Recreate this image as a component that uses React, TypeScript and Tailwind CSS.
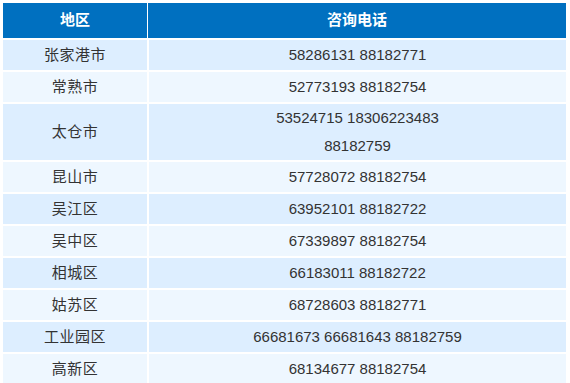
import React from 'react';

interface Row {
  area: string;
  phones: string[];
}

// 一行可能有两行号码（太仓市）
const rows: Row[] = [
  { area: '张家港市', phones: ['58286131 88182771'] },
  { area: '常熟市', phones: ['52773193 88182754'] },
  { area: '太仓市', phones: ['53524715 18306223483', '88182759'] },
  { area: '昆山市', phones: ['57728072 88182754'] },
  { area: '吴江区', phones: ['63952101 88182722'] },
  { area: '吴中区', phones: ['67339897 88182754'] },
  { area: '相城区', phones: ['66183011 88182722'] },
  { area: '姑苏区', phones: ['68728603 88182771'] },
  { area: '工业园区', phones: ['66681673 66681643 88182759'] },
  { area: '高新区', phones: ['68134677 88182754'] },
];

const App: React.FC = () => {
  return (
    <div
      className="w-[570px] h-[383px] overflow-hidden bg-white pl-[3px] pt-[3px]"
      style={{ fontFamily: '"Liberation Sans", Arial, "Noto Sans CJK SC", sans-serif' }}
    >
      <div className="w-[563px] flex flex-col gap-y-[2px]">
        {/* 表头 */}
        <div className="grid grid-cols-[144px_418px] gap-x-px h-[35px]">
          <div className="bg-[#0070c0] flex items-center justify-center text-white text-[15px] font-bold">
            地区
          </div>
          <div className="bg-[#0070c0] flex items-center justify-center text-white text-[15px] font-bold">
            咨询电话
          </div>
        </div>

        {rows.map((row, i) => {
          const bg = i % 2 === 0 ? 'bg-[#ddeeff]' : 'bg-[#eef7ff]';
          const tall = row.phones.length > 1;
          return (
            <div
              key={row.area}
              className={`grid grid-cols-[144px_417px] gap-x-[2px] ${tall ? 'h-[56px]' : 'h-[30px]'}`}
            >
              <div
                className={`${bg} flex items-center justify-center text-[15px] text-[#333333] tracking-[0.5px]`}
              >
                {row.area}
              </div>
              <div
                className={`${bg} flex flex-col items-center justify-center text-[15px] text-[#333333] leading-[28px]`}
              >
                {row.phones.map((p) => (
                  <span key={p}>{p}</span>
                ))}
              </div>
            </div>
          );
        })}
      </div>
    </div>
  );
};

export default App;
